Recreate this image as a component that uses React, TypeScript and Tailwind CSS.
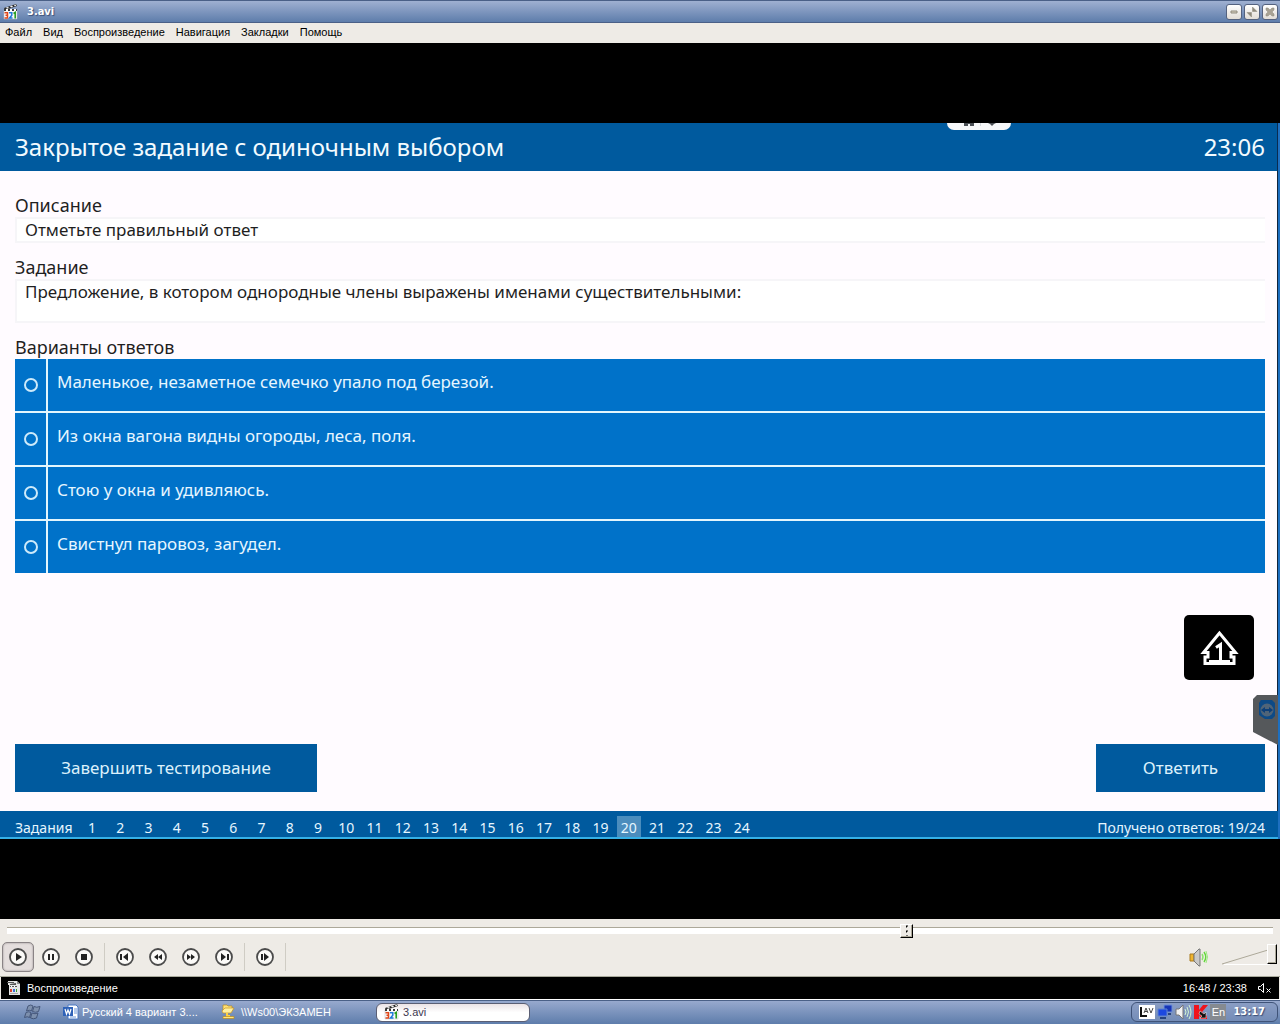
import React, { useState } from 'react';
import clsx from 'clsx';

const MENU = ['Файл', 'Вид', 'Воспроизведение', 'Навигация', 'Закладки', 'Помощь'];

const ANSWERS = [
  'Маленькое, незаметное семечко упало под березой.',
  'Из окна вагона видны огороды, леса, поля.',
  'Стою у окна и удивляюсь.',
  'Свистнул паровоз, загудел.',
];

const TASK_COUNT = 24;

const ClapIcon = () => (
  <svg width="16" height="16" viewBox="0 0 16 16" className="shrink-0">
    <path d="M1 4 13 0l1 2L2 6z" fill="#2a2a2a" />
    <path d="M3 3.5l2-.6 1 1.2-2 .6zM7 2.2l2-.6 1 1.2-2 .6zM11 1l1.5-.5.7 1.3-1.5.5z" fill="#f5f5f5" />
    <path d="M1 6h13v9H1z" fill="#f8f8f8" stroke="#b9bcc4" strokeWidth=".5" />
    <path d="M1 5h13v2H1z" fill="#3a3a3a" />
    <path d="M3 5h2v2H3zM7 5h2v2H7zM11 5h2v2h-2z" fill="#fff" />
    <path d="M1.500 8.800h3v2.500h-2 2v2.700h-3" fill="none" stroke="#e0481c" strokeWidth="1.5" />
    <path d="M6 8.800h2.800v2.500L6.500 14H9.500" fill="none" stroke="#1f78d8" strokeWidth="1.5" />
    <path d="M10.500 9.500l1.700-1v6" fill="none" stroke="#2aa022" strokeWidth="1.6" />
  </svg>
);

const FileIcon = () => (
  <svg width="14" height="16" viewBox="0 0 14 16" className="shrink-0">
    <path d="M1 1h9l3 3v11H2V5H1z" fill="#e6e6e6" />
    <path d="M10 1v3h3z" fill="#8c8c8c" />
    <path d="M0 2h7v1H0zM3 4l6-1v2H3zM3 6h7v1H3z" fill="#555" />
    <path d="M4 6h1v1H4zM7 6h1v1H7z" fill="#fff" />
    <path d="M3 9h2v3H3z" fill="#d9432f" />
    <path d="M6 9h2v3H6z" fill="#3a6fd8" />
    <path d="M9 9h1v3H9z" fill="#35a02c" />
    <path d="M3 13h8v1H3z" fill="#aaa" />
  </svg>
);

// Path inside of the round 20x20 transport button
const GLYPHS: Record<string, string> = {
  play: 'M8 6l6 4-6 4z',
  pause: 'M7 7h2v6H7zM11 7h2v6h-2z',
  stop: 'M7 7h6v6H7z',
  prev: 'M5 7h2v6H5zM13 6v8l-5-4z',
  rewind: 'M10 7v6l-4-3zM14 7v6l-4-3z',
  forward: 'M6 7v6l4-3zM10 7v6l4-3z',
  next: 'M7 6v8l5-4zM13 7h2v6h-2z',
  step: 'M6 7h2v6H6zM9 6l5 4-5 4z',
};

const RoundGlyph: React.FC<{ name: string }> = ({ name }) => (
  <svg width="20" height="20" viewBox="0 0 20 20">
    <circle cx="10" cy="10" r="8" fill="#fbfaf8" stroke="#4b4b4b" strokeWidth="1.8" />
    <path d={GLYPHS[name]} fill="#222" />
  </svg>
);

const PlayerButton: React.FC<{ name: string; label: string; active?: boolean }> = ({ name, label, active }) => (
  <button
    aria-label={label}
    className={clsx(
      'flex h-[30px] w-8 items-center justify-center rounded-[5px] border',
      active ? 'border-[#8a8486] bg-[#e4dedd] shadow-[inset_0_0_2px_#8a8486]' : 'border-transparent'
    )}
  >
    <RoundGlyph name={name} />
  </button>
);

const Divider = () => <span className="mx-[3px] h-7 w-px bg-[#cfccc4]" />;

const WINDOW_BUTTONS = [
  { label: 'Свернуть', d: 'M5 7h6v2H5z', fill: '#d6d0c0', stroke: 1 },
  { label: 'Развернуть', d: 'M8.500 3v4.500H13zM7.500 13V8.500H3z', fill: '#8f8a7d', stroke: 0.5 },
  { label: 'Закрыть', d: 'M4 4h2l2 2 2-2h2v2l-2 2 2 2v2h-2l-2-2-2 2H4v-2l2-2-2-2z', fill: '#a8a294', stroke: 0.5 },
];

const TitleBar = () => (
  <header className="flex h-[23px] items-center border-y border-[#4a6087] bg-linear-to-b from-[#9fb0d1] to-[#5e7dab] pr-[2px] pl-[3px]">
    <ClapIcon />
    <h1 className="ml-2 pt-px font-['DejaVu_Sans_Condensed','Liberation_Sans',sans-serif] text-[11px] font-bold text-white [text-shadow:1px_1px_1px_#3b4f78]">
      3.avi
    </h1>
    <div className="ml-auto flex gap-[2px]">
      {WINDOW_BUTTONS.map(({ label, d, fill, stroke }) => (
        <button
          key={label}
          aria-label={label}
          className="flex size-4 items-center justify-center rounded-[3px] border border-[#54627f] bg-linear-to-b from-white to-[#e2ddd6]"
        >
          <svg width="14" height="14" viewBox="1 1 14 14" className="shrink-0">
            <path d={d} fill={fill} stroke="#8f8a7d" strokeWidth={stroke} />
          </svg>
        </button>
      ))}
    </div>
  </header>
);

const MenuBar = () => (
  <nav className="flex h-5 items-start gap-[11px] bg-[#eeebe6] px-[5px] text-[11px] leading-[18px] text-black">
    {MENU.map((item) => (
      <button key={item}>{item}</button>
    ))}
  </nav>
);

const Quiz = () => {
  const [answer, setAnswer] = useState<number | null>(null);

  return (
    <main className="relative flex flex-1 flex-col border-r-2 border-[#1d6fc0] bg-[#fffbff] font-['Noto_Sans','Open_Sans',sans-serif] text-[#1f1f1f]">
      <div className="absolute top-0 right-[267px] flex h-[7px] w-16 justify-center overflow-hidden rounded-b-[8px] bg-[#f7f8fa]">
        <svg width="40" height="4" viewBox="0 0 40 4">
          <path d="M5 0h4v3H5zM11 0h4v3h-4zM9 0h2v1H9zM29 0h8l-2 1-2 2-2-2z" fill="#4a4f55" />
          <path d="M21 0h1v3h-1z" fill="#d4d8dc" />
        </svg>
      </div>

      <div className="flex h-12 items-center justify-between border-r border-[#0a2c50] bg-[#005a9e] pr-3 pl-[15px] text-[24px] leading-8 text-[#f2faff]">
        <h2>Закрытое задание с одиночным выбором</h2>
        <time>23:06</time>
      </div>

      <div className="flex flex-1 flex-col border-r border-[#10253d] pt-[22px] pr-3 pb-[19px] pl-[15px]">
        <h3 className="text-[18px] leading-6">Описание</h3>
        <p className="border-2 border-r-0 border-[#f6f5f8] bg-white px-2 text-[17px] leading-[22px]">Отметьте правильный ответ</p>

        <h3 className="mt-3 text-[18px] leading-6">Задание</h3>
        <p className="min-h-11 border-2 border-r-0 border-[#f6f5f8] bg-white px-2 text-[17px] leading-[22px]">
          Предложение, в котором однородные члены выражены именами существительными:
        </p>

        <fieldset className="mt-3">
          <legend className="text-[18px] leading-6">Варианты ответов</legend>
          <div className="flex flex-col gap-[2px] bg-[#e3f6fd]">
            {ANSWERS.map((text, i) => (
              <label key={text} className="flex h-[52px] gap-[2px] text-[17px] leading-[22px] text-[#e6f6ff]">
                <span className="flex w-[31px] items-center justify-center bg-[#0072c9] pl-px">
                  <input
                    type="radio"
                    name="answer"
                    checked={answer === i}
                    onChange={() => setAnswer(i)}
                    className="size-[14px] appearance-none rounded-full border-2 border-[#cdeafa] checked:bg-white"
                  />
                </span>
                <span className="flex-1 bg-[#0072c9] px-[9px] pt-3">{text}</span>
              </label>
            ))}
          </div>
        </fieldset>

        <div className="mt-auto flex justify-between pt-6 text-[17px] text-[#dcf1fc]">
          <button className="h-12 w-[302px] bg-[#005a9e]">Завершить тестирование</button>
          <button className="h-12 w-[169px] bg-[#005a9e]">Ответить</button>
        </div>
      </div>

      <button
        aria-label="Shift"
        className="absolute right-6 bottom-[159px] flex h-[65px] w-[70px] items-center justify-center rounded-[5px] bg-black"
      >
        <svg width="40" height="40" viewBox="0 0 40 40">
          <path d="M20.500 5 4.500 24.500H9V29H6v6.500h29V29h-3v-4.500h4.500z" fill="none" stroke="#fff" strokeWidth="3" />
          <path d="M10 33h21" stroke="#fff" strokeWidth="2" />
          <path d="M17 19.500l4.500-3V32" fill="none" stroke="#fff" strokeWidth="3" />
        </svg>
      </button>

      <svg width="25" height="50" viewBox="0 0 25 50" className="absolute right-0 bottom-[94px]">
        <path d="M4 0h21v50L0 37V4z" fill="#55585b" />
        <path d="M8 5h11l3 3v13l-3 3h-7l-6-4V8z" fill="#0d4a86" />
        <circle cx="14" cy="15" r="6.5" fill="#4f6478" />
        <path d="M8 15l4-3v2h4v-2l4 3-4 3v-2h-4v2z" fill="#0d3f78" />
      </svg>

      <div className="flex h-7 items-start border-b-2 border-[#35b0e6] bg-[#005a9e] pr-[13px] pl-[15px] text-[14px] text-[#e6f6ff]">
        <span className="w-[63px] pt-[7px] leading-5">Задания</span>
        <div className="grid w-[678px] grid-cols-24 pt-[5px]">
          {Array.from({ length: TASK_COUNT }, (_, i) => i + 1).map((n) => (
            <button key={n} className={clsx('mx-[2px] h-[21px] pt-[2px] leading-5', n === 20 && 'bg-[#4b8dbd]')}>
              {n}
            </button>
          ))}
        </div>
        <span className="ml-auto pt-[7px] leading-5">Получено ответов: 19/24</span>
      </div>
    </main>
  );
};

const SpeakerIcon = () => (
  <svg width="20" height="20" viewBox="0 0 20 20">
    <path d="M1 7h4v7H1z" fill="#f0b52e" stroke="#a87a20" />
    <path d="M5 7l5-5h1v17h-1l-5-5z" fill="#c9c9c9" stroke="#777" />
    <path d="M13 7q2 3 0 6" fill="none" stroke="#8be36a" strokeWidth="1.4" />
    <path d="M15 5q3.500 5 0 10" fill="none" stroke="#62d83a" strokeWidth="1.4" />
    <path d="M17 4q3 6 0 12" fill="none" stroke="#9be880" strokeWidth="1" />
  </svg>
);

const Controls = () => (
  <section className="bg-[#eeebe6] pt-[3px]">
    <div className="flex h-4 items-center px-[7px]">
      <input
        type="range"
        aria-label="Позиция"
        min={0}
        max={1418}
        defaultValue={1011}
        className="h-[7px] w-full appearance-none border-t border-[#aca899] bg-white [&::-webkit-slider-thumb]:h-[14px] [&::-webkit-slider-thumb]:w-[13px] [&::-webkit-slider-thumb]:appearance-none [&::-webkit-slider-thumb]:border [&::-webkit-slider-thumb]:border-t-white [&::-webkit-slider-thumb]:border-r-black [&::-webkit-slider-thumb]:border-b-black [&::-webkit-slider-thumb]:border-l-white [&::-webkit-slider-thumb]:bg-[#eeebe6] [&::-webkit-slider-thumb]:bg-[radial-gradient(circle,#000_1px,transparent_1px)] [&::-webkit-slider-thumb]:bg-size-[5px_5px] [&::-webkit-slider-thumb]:bg-center [&::-webkit-slider-thumb]:bg-repeat-y [&::-webkit-slider-thumb]:shadow-[inset_-1px_-1px_#aca899]"
      />
    </div>
    <div className="flex h-[38px] items-center gap-px pr-[3px] pl-[2px]">
      <PlayerButton name="play" label="Воспроизвести" active />
      <PlayerButton name="pause" label="Пауза" />
      <PlayerButton name="stop" label="Стоп" />
      <Divider />
      <PlayerButton name="prev" label="Назад" />
      <PlayerButton name="rewind" label="Медленнее" />
      <PlayerButton name="forward" label="Быстрее" />
      <PlayerButton name="next" label="Вперед" />
      <Divider />
      <PlayerButton name="step" label="Кадр" />
      <Divider />
      <button aria-label="Звук" className="ml-auto">
        <SpeakerIcon />
      </button>
      <div className="relative ml-3 h-6 w-[55px]">
        <svg width="48" height="16" viewBox="0 0 48 16" className="absolute bottom-1 left-0">
          <path d="M0 15 46 1" stroke="#aca899" fill="none" />
          <path d="M2 15.500h46" stroke="#fff" fill="none" />
        </svg>
        <input
          type="range"
          aria-label="Громкость"
          defaultValue={100}
          className="absolute inset-x-0 top-0 h-[18px] w-full appearance-none bg-transparent [&::-webkit-slider-thumb]:h-5 [&::-webkit-slider-thumb]:w-[10px] [&::-webkit-slider-thumb]:appearance-none [&::-webkit-slider-thumb]:border [&::-webkit-slider-thumb]:border-t-white [&::-webkit-slider-thumb]:border-r-black [&::-webkit-slider-thumb]:border-b-black [&::-webkit-slider-thumb]:border-l-white [&::-webkit-slider-thumb]:bg-[#eeebe6] [&::-webkit-slider-thumb]:shadow-[inset_-1px_-1px_#aca899]"
        />
      </div>
    </div>
    <div className="h-px bg-[#a9aa9c]" />
  </section>
);

const StatusBar = () => (
  <div className="flex h-[22px] items-center border-x border-[#eeebe6] bg-black pr-[7px] pl-[6px] text-[11px] text-white">
    <FileIcon />
    <span className="ml-[6px]">Воспроизведение</span>
    <span className="ml-auto">16:48 / 23:38</span>
    <svg width="15" height="14" viewBox="0 0 15 14" className="ml-[10px]">
      <path d="M1.500 5.500h2l3-3v9l-3-3h-2z" fill="none" stroke="#fff" />
      <path d="M9.500 7.500l4 4M13.500 7.500l-4 4" stroke="#fff" />
    </svg>
  </div>
);

const Taskbar = () => (
  <footer className="flex h-[25px] items-center border-t border-white bg-linear-to-b from-[#9aabcf] to-[#5e7dab] pr-[2px] pl-6 text-[11px] text-white shadow-[inset_0_1px_#4a6087]">
    <button aria-label="Пуск">
      <svg width="18" height="18" viewBox="0 0 18 18" className="opacity-80">
        <path
          d="M4 3q3-2 5 0L7.500 8q-2-1.500-5 0zM10 3.500q2.500 1.500 6 0L14.500 8.500q-3 1.500-6 0zM2 9.500q3-1.500 5 0L5.500 14.500q-2-1.500-5 0zM8 10q3 1.500 6 0L12.500 15q-3 1.500-6 0z"
          fill="#7f90ab"
          stroke="#39496a"
        />
      </svg>
    </button>
    <button className="ml-[21px] flex w-[158px] items-center text-left">
      <svg width="16" height="16" viewBox="0 0 16 16" className="mr-[3px] shrink-0">
        <path d="M5 1h8l2 2v12H5z" fill="#fff" stroke="#4a78c4" />
        <path d="M11 5h3M11 7h3M11 9h3M7 13h6" stroke="#6f97d8" />
        <path d="M0 3h10v9H0z" fill="#2f62b8" />
        <path d="M2 5l1.500 5L5 6l1.500 4L8 5" fill="none" stroke="#fff" strokeWidth="1.2" />
      </svg>
      Русский 4 вариант 3....
    </button>
    <button className="flex w-[155px] items-center text-left">
      <svg width="16" height="16" viewBox="0 0 16 16" className="mr-1 shrink-0">
        <path d="M2 1h4l1 1h4v5H2z" fill="#ffe27a" stroke="#b98a1c" strokeWidth=".7" />
        <path d="M1 7l3-3h9l-3 5H2z" fill="#fff0a0" stroke="#c9951d" strokeWidth=".7" />
        <path d="M6 9v3h3" fill="none" stroke="#ffd23f" strokeWidth="2" />
        <path d="M2 12.500h11v2H2z" fill="#ffe680" stroke="#b98a1c" strokeWidth=".7" />
      </svg>
      \\Ws00\ЭКЗАМЕН
    </button>
    <button className="flex h-[19px] w-[154px] items-center gap-[3px] rounded-[6px] border border-[#5b5f74] bg-linear-to-b from-[#ebe3e6] to-white to-50% pl-[7px] text-[#3c3850]">
      <ClapIcon />
      3.avi
    </button>
    <div className="ml-auto flex h-5 items-center gap-[2px] rounded-[6px] border border-[#3f5378] bg-[#8296bd]/50 pr-3 pl-[7px]">
      <svg width="16" height="16" viewBox="0 0 16 16">
        <path d="M0 1h16v14H0z" fill="#fff" />
        <path d="M2 3v9h6" fill="none" stroke="#111" strokeWidth="2" />
        <path d="M5 9l2-5 2 5M6 7.500h2M10 4l2 5 2-5" fill="none" stroke="#444" />
      </svg>
      <svg width="16" height="16" viewBox="0 0 16 16">
        <path d="M7 1h8v7H7z" fill="#1735b8" stroke="#6d8fd8" />
        <path d="M1 5h9v7H1z" fill="#1c48e0" stroke="#5c82cf" />
        <path d="M3 14h6M11 10h3" stroke="#26437f" strokeWidth="2" />
      </svg>
      <svg width="17" height="16" viewBox="0 0 17 16">
        <path d="M1 5h3l4-4v14l-4-4H1z" fill="#f2f2f2" stroke="#777" />
        <path d="M10 5q2 3 0 6M12 3q3 5 0 10M14 1q4 7 0 14" fill="none" stroke="#d3f5d0" />
      </svg>
      <svg width="14" height="16" viewBox="0 0 14 16">
        <path d="M0 1h5v5l4-5h5L8 8l5 4v3H7l-2-4v4H0z" fill="#f0141c" />
        <path d="M6 7l4 3 2-2v6H6l2-2-3-2z" fill="#111" stroke="#fff" strokeWidth=".5" />
      </svg>
      <span className="h-4 w-4 bg-[#858a90] text-center leading-4">En</span>
      <time className="ml-[5px] font-['DejaVu_Sans_Condensed','Liberation_Sans',sans-serif] text-[11px] font-bold [text-shadow:1px_1px_1px_#3b4f78]">
        13:17
      </time>
    </div>
  </footer>
);

export default function App() {
  return (
    <div className="flex min-h-screen flex-col bg-black font-['Liberation_Sans',Arial,sans-serif]">
      <TitleBar />
      <MenuBar />
      <div className="flex flex-1 flex-col py-20">
        <Quiz />
      </div>
      <Controls />
      <StatusBar />
      <Taskbar />
    </div>
  );
}
